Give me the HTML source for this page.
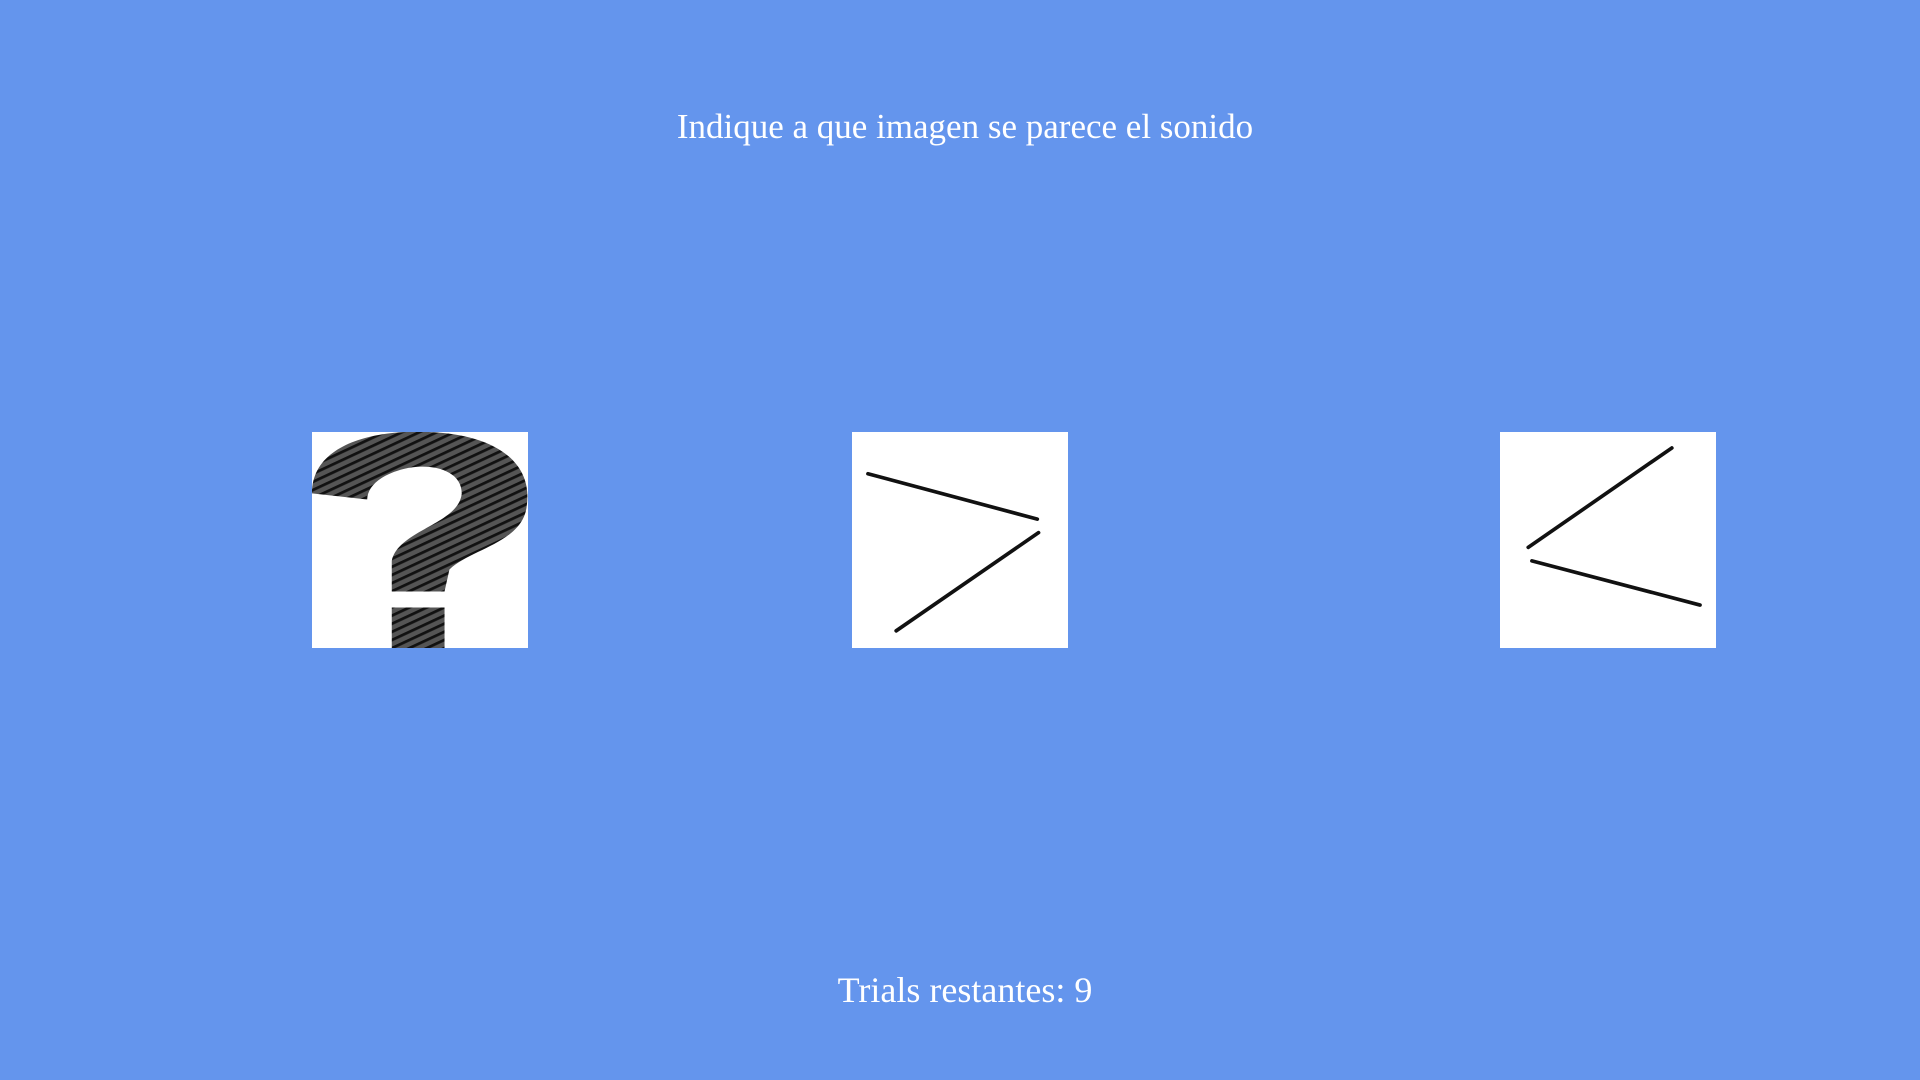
<!DOCTYPE html>
<html><head><meta charset="utf-8"><style>
html,body{margin:0;padding:0}
body{width:1920px;height:1080px;background:#6495ED;position:relative;overflow:hidden;font-family:"Liberation Serif",serif;color:#fff}
.t{position:absolute;left:0;width:1930px;text-align:center;font-size:35px}
.b{position:absolute;top:432px;width:216px;height:216px;background:#fff}
svg{display:block}
</style></head><body>
<div class="t" style="top:107px">Indique a que imagen se parece el sonido</div>
<div class="b" style="left:312px">
<svg width="216" height="216" viewBox="0 0 176 176">
<defs><pattern id="h" width="6" height="6" patternUnits="userSpaceOnUse" patternTransform="rotate(-25)">
<rect width="6" height="6" fill="#555"/><line x1="0" y1="1" x2="6" y2="1" stroke="#111" stroke-width="2.5"/></pattern>
<clipPath id="c"><rect width="176" height="176"/></clipPath></defs>
<g clip-path="url(#c)" fill="url(#h)">
<path d="M0 50 C0 10 50 -2 95 0 C150 2 180 25 175 60 C172 90 130 95 112 112 L108 130 L65 130 L65 105 C70 80 120 75 122 50 C122 30 95 25 75 30 C55 35 45 45 45 55 Z"/>
<rect x="65" y="143" width="43" height="40"/>
</g>
</svg></div>
<div class="b" style="left:852px">
<svg width="216" height="216" viewBox="0 0 176 176" stroke="#111" stroke-width="3" stroke-linecap="round">
<line x1="13" y1="34" x2="151" y2="71"/><line x1="152" y1="82" x2="36" y2="162"/></svg></div>
<div class="b" style="left:1500px">
<svg width="216" height="216" viewBox="0 0 176 176" stroke="#111" stroke-width="3" stroke-linecap="round">
<line x1="140" y1="13" x2="23" y2="94"/><line x1="26" y1="105" x2="163" y2="141"/></svg></div>
<div class="t" style="top:969px;font-size:36px">Trials restantes: 9</div>
</body></html>
